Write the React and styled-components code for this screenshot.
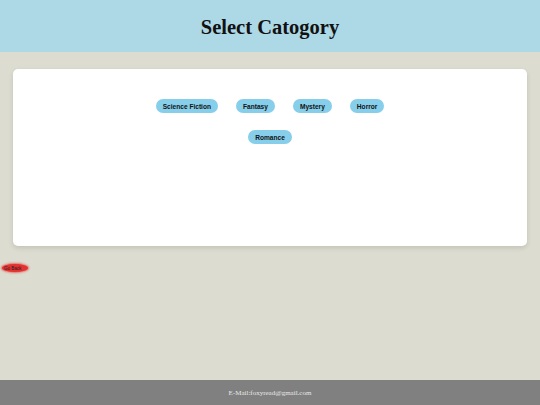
import styled, { createGlobalStyle } from "styled-components";

const GlobalStyle = createGlobalStyle`
  html, body {
    margin: 0;
    padding: 0;
    background-color: #dcdcd0;
  }
`;

const Page = styled.div`
  min-height: 405px;
  display: flex;
  flex-direction: column;
`;

const Header = styled.header`
  height: 52px;
  background-color: #add8e6;
  display: flex;
  align-items: center;
  justify-content: center;
`;

const Title = styled.h1`
  margin: 0;
  font-family: "Liberation Serif", serif;
  font-weight: bold;
  font-size: 20.5px;
  color: #111;
  padding-top: 2px;
`;

const Main = styled.main`
  padding: 17px 13px 0;
`;

const Card = styled.section`
  height: 177px;
  background-color: #fff;
  border-radius: 5px;
  box-shadow: 0 2px 5px rgba(0, 0, 0, 0.12);
  padding: 30px 120px 0;
  box-sizing: border-box;
  display: flex;
  flex-wrap: wrap;
  justify-content: center;
  align-content: flex-start;
  row-gap: 17px;
`;

const Category = styled.button`
  height: 14px;
  margin: 0 9px;
  padding: 0 7px;
  border: none;
  border-radius: 7px;
  background-color: #87ceeb;
  font-family: "Liberation Sans", Arial, sans-serif;
  font-weight: bold;
  font-size: 6.6px;
  color: #111;
  cursor: pointer;
`;

const BackButton = styled.button`
  align-self: flex-start;
  margin: 18px 0 0 2px;
  width: 26px;
  height: 8px;
  padding: 0 0 0 2px;
  border: none;
  border-radius: 50%;
  background-color: #e53030;
  box-shadow: 0 0 2px 1px rgba(230, 40, 40, 0.6);
  font-family: "Liberation Sans", Arial, sans-serif;
  font-size: 4.5px;
  color: #222;
  text-align: left;
`;

const Footer = styled.footer`
  margin-top: auto;
  height: 25px;
  background-color: #808080;
  display: flex;
  align-items: center;
  justify-content: center;
  font-family: "Liberation Serif", serif;
  font-size: 7px;
  color: #e8e8e8;
`;

const categories = ["Science Fiction", "Fantasy", "Mystery", "Horror", "Romance"];

export default function App() {
  return (
    <>
      <GlobalStyle />
      <Page>
        <Header>
          <Title>Select Catogory</Title>
        </Header>
        <Main>
          <Card>
            {categories.map((c) => (
              <Category key={c}>{c}</Category>
            ))}
          </Card>
        </Main>
        <BackButton>Go Back</BackButton>
        <Footer>E-Mail:foxyread@gmail.com</Footer>
      </Page>
    </>
  );
}
